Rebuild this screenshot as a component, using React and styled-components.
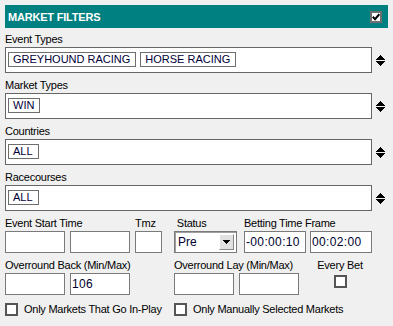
import styled, { createGlobalStyle } from "styled-components";

const GlobalStyle = createGlobalStyle`
  html, body {
    margin: 0;
    background: #f0f0f0;
  }
  body {
    font-family: "Liberation Sans", Arial, sans-serif;
    font-size: 11px;
    color: #000;
  }
`;

const Panel = styled.div`
  width: 393px;
  box-sizing: border-box;
  padding: 5px 5px 0 5px;
`;

const Header = styled.div`
  height: 23px;
  background: #008080;
  color: #fff;
  font-weight: bold;
  font-size: 11px;
  letter-spacing: -0.2px;
  display: flex;
  align-items: center;
  justify-content: space-between;
  padding: 0 6px 0 3px;
`;

const Check = styled.span`
  display: inline-flex;
  align-items: center;
  justify-content: center;
  flex: none;
  width: ${(p) => p.$size || 13}px;
  height: ${(p) => p.$size || 13}px;
  box-sizing: border-box;
  border: 2px solid ${(p) => p.$tone || "#555"};
  background: #fff;
  margin-top: ${(p) => p.$offset || 0}px;
`;

const Section = styled.div`
  margin-top: ${(p) => (p.$first ? 4 : 5)}px;
`;

const Label = styled.div`
  height: 14px;
  line-height: 14px;
  margin-bottom: 1px;
  letter-spacing: -0.25px;
  white-space: nowrap;
  text-align: ${(p) => p.$align || "left"};
`;

const ListRow = styled.div`
  display: flex;
  align-items: center;
`;

const TagBox = styled.div`
  flex: 1;
  height: 26px;
  box-sizing: border-box;
  border: 1px solid #666;
  background: #fff;
  padding: 4px 2px;
  display: flex;
  align-items: flex-start;
  gap: 4px;
`;

const Tag = styled.span`
  height: 15px;
  box-sizing: border-box;
  border: 1px solid #6e6e6e;
  padding: 0 5px 0 4px;
  line-height: 13px;
  color: #000038;
  white-space: nowrap;
`;

const Spin = styled.div`
  width: 16px;
  display: flex;
  justify-content: center;
`;

const Grid = styled.div`
  display: grid;
  grid-template-columns: ${(p) => p.$cols};
  margin-top: 5px;
`;

const Group = styled.div`
  display: flex;
  flex-direction: column;
  align-items: ${(p) => (p.$center ? "center" : "stretch")};
`;

const Inputs = styled.div`
  display: flex;
  gap: ${(p) => p.$gap || 5}px;
`;

const Field = styled.input`
  width: ${(p) => p.$w}px;
  height: 22px;
  box-sizing: border-box;
  border: 1px solid #7a7a7a;
  background: #fff;
  padding: 0 1px;
  margin: 0;
  font-family: "Liberation Sans", Arial, sans-serif;
  font-size: 12px;
  letter-spacing: 0.35px;
  color: #000030;
  outline: none;
`;

const Select = styled.div`
  width: 63px;
  height: 22px;
  box-sizing: border-box;
  border: 1px solid #7a7a7a;
  box-shadow: inset 1px 1px 0 #a0a0a0;
  background: #fff;
  display: flex;
  align-items: center;
  padding: 2px 2px 2px 2px;
`;

const SelectText = styled.span`
  flex: 1;
  font-size: 12px;
  padding-left: 1px;
  color: #000030;
`;

const DropButton = styled.span`
  width: 15px;
  height: 16px;
  box-sizing: border-box;
  background: #e1e1e1;
  border: 1px solid #fff;
  border-right-color: #888;
  border-bottom-color: #888;
  display: flex;
  align-items: center;
  justify-content: center;
`;

const Options = styled.div`
  display: grid;
  grid-template-columns: 169px auto;
  margin-top: 8px;
`;

const Option = styled.label`
  display: flex;
  align-items: center;
  gap: 6px;
  letter-spacing: -0.25px;
  white-space: nowrap;
  line-height: 13px;
`;

const SpinIcon = () => (
  <svg width="10" height="11" viewBox="0 0 10 11" shapeRendering="crispEdges">
    <polygon points="5,0 10,5 0,5" fill="#000" />
    <polygon points="0,6 10,6 5,11" fill="#000" />
  </svg>
);

const CheckMark = () => (
  <svg width="8" height="8" viewBox="0 0 8 8">
    <polyline points="0.8,3.8 3,6.2 7.3,1.2" fill="none" stroke="#000" strokeWidth="2" />
  </svg>
);

const Caret = () => (
  <svg width="7" height="4" viewBox="0 0 7 4" shapeRendering="crispEdges">
    <polygon points="0,0 7,0 3.5,4" fill="#000" />
  </svg>
);

const lists = [
  { label: "Event Types", tags: ["GREYHOUND RACING", "HORSE RACING"] },
  { label: "Market Types", tags: ["WIN"] },
  { label: "Countries", tags: ["ALL"] },
  { label: "Racecourses", tags: ["ALL"] },
];

export default function App() {
  return (
    <Panel>
      <GlobalStyle />
      <Header>
        <span>MARKET FILTERS</span>
        <Check $size={12} $tone="#6e6e6e">
          <CheckMark />
        </Check>
      </Header>

      {lists.map((list, i) => (
        <Section key={list.label} $first={i === 0}>
          <Label>{list.label}</Label>
          <ListRow>
            <TagBox>
              {list.tags.map((t) => (
                <Tag key={t}>{t}</Tag>
              ))}
            </TagBox>
            <Spin>
              <SpinIcon />
            </Spin>
          </ListRow>
        </Section>
      ))}

      <Grid $cols="130px 39px 70px 128px">
        <Group>
          <Label>Event Start Time</Label>
          <Inputs>
            <Field $w={60} readOnly />
            <Field $w={60} readOnly />
          </Inputs>
        </Group>
        <Group>
          <Label>Tmz</Label>
          <Field $w={27} readOnly />
        </Group>
        <Group>
          <Label>&nbsp;Status</Label>
          <Select>
            <SelectText>Pre</SelectText>
            <DropButton>
              <Caret />
            </DropButton>
          </Select>
        </Group>
        <Group>
          <Label>Betting Time Frame</Label>
          <Inputs $gap={4}>
            <Field $w={62} readOnly defaultValue="-00:00:10" />
            <Field $w={62} readOnly defaultValue="00:02:00" />
          </Inputs>
        </Group>
      </Grid>

      <Grid $cols="169px 131px 70px">
        <Group>
          <Label>Overround Back (Min/Max)</Label>
          <Inputs>
            <Field $w={60} readOnly />
            <Field $w={60} readOnly defaultValue="106" />
          </Inputs>
        </Group>
        <Group>
          <Label>Overround Lay (Min/Max)</Label>
          <Inputs>
            <Field $w={60} readOnly />
            <Field $w={60} readOnly />
          </Inputs>
        </Group>
        <Group $center>
          <Label $align="center">Every Bet</Label>
          <Check $offset={2} />
        </Group>
      </Grid>

      <Options>
        <Option>
          <Check />
          Only Markets That Go In-Play
        </Option>
        <Option>
          <Check />
          Only Manually Selected Markets
        </Option>
      </Options>
    </Panel>
  );
}
